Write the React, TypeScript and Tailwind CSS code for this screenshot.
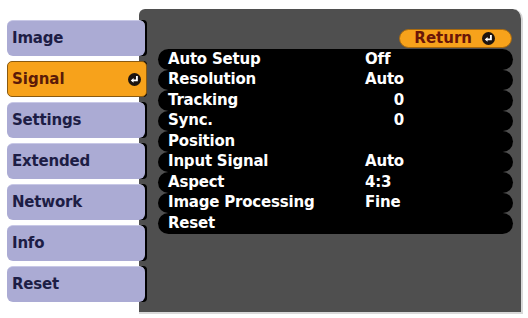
import React from "react";

const menu = ["Image", "Signal", "Settings", "Extended", "Network", "Info", "Reset"];

const rows: { label: string; value?: string; right?: boolean }[] = [
  { label: "Auto Setup", value: "Off" },
  { label: "Resolution", value: "Auto" },
  { label: "Tracking", value: "0", right: true },
  { label: "Sync.", value: "0", right: true },
  { label: "Position" },
  { label: "Input Signal", value: "Auto" },
  { label: "Aspect", value: "4:3" },
  { label: "Image Processing", value: "Fine" },
  { label: "Reset" },
];

const EnterIcon = ({ size = 14 }: { size?: number }) => (
  <svg width={size} height={size} viewBox="0 0 14 14">
    <circle cx="7" cy="7" r="7" fill="#1c1410" />
    <path d="M9.6 3.2 V8 H5" stroke="#fff" strokeWidth="2" fill="none" />
    <path d="M3 8 L6 5.4 V10.6 Z" fill="#fff" />
  </svg>
);

export default function App() {
  return (
    <div
      className="w-[528px] h-[318px] bg-white flex pl-[7px] pt-[9px] overflow-hidden"
      style={{ fontFamily: '"DejaVu Sans", Verdana, sans-serif' }}
    >
      {/* left menu */}
      <div className="w-[132px] pt-[11px] flex flex-col gap-[5px] relative z-10">
        {menu.map((m) =>
          m === "Signal" ? (
            <div
              key={m}
              className="h-[36px] w-[140px] rounded-[5px] bg-[#f7a21b] border border-[#8a5a10] flex items-center justify-between pl-[4px] pr-[5px] text-[15px] font-bold text-[#5b1a08]"
            >
              <span>{m}</span>
              <EnterIcon size={13} />
            </div>
          ) : (
            <div
              key={m}
              className="h-[36px] w-[138px] rounded-[6px] bg-[#ababd4] border-t border-[#c8c8e6] flex items-center pl-[5px] text-[15px] font-bold text-[#1d1d45] tracking-[-0.2px]"
            >
              {m}
            </div>
          )
        )}
      </div>

      {/* main panel */}
      <div className="w-[384px] h-[305px] bg-[#4f4f4f] rounded-tr-[10px] rounded-tl-[6px] border-r-2 border-b-2 border-[#d8d8d8] flex">
        <div className="w-[8px] pt-[11px] flex flex-col gap-[5px]">
          {menu.map((m) => (
            <div key={m} className="h-[36px] bg-black rounded-r-[4px] rounded-l-[2px]" />
          ))}
        </div>
        <div className="flex-1 pl-[11px] pr-[8px] pt-[20px]">
          <div className="flex justify-end pr-[1px] mb-[1px]">
            <div className="h-[19px] w-[113px] rounded-full bg-[#f7a21b] border border-[#a86a10] flex items-center justify-end gap-[10px] pr-[16px] text-[15px] font-bold text-[#6a1608] leading-none">
              <span>Return</span>
              <EnterIcon size={13} />
            </div>
          </div>
          <div className="flex flex-col">
            {rows.map((r) => (
              <div
                key={r.label}
                className="h-[20.5px] bg-black rounded-full flex items-center text-white text-[15px] font-bold leading-none tracking-[-0.2px]"
              >
                <span className="w-[207px] pl-[10px]">{r.label}</span>
                {r.value && (
                  <span className={r.right ? "w-[39px] text-right" : "w-[39px]"}>{r.value}</span>
                )}
              </div>
            ))}
          </div>
        </div>
      </div>
    </div>
  );
}
